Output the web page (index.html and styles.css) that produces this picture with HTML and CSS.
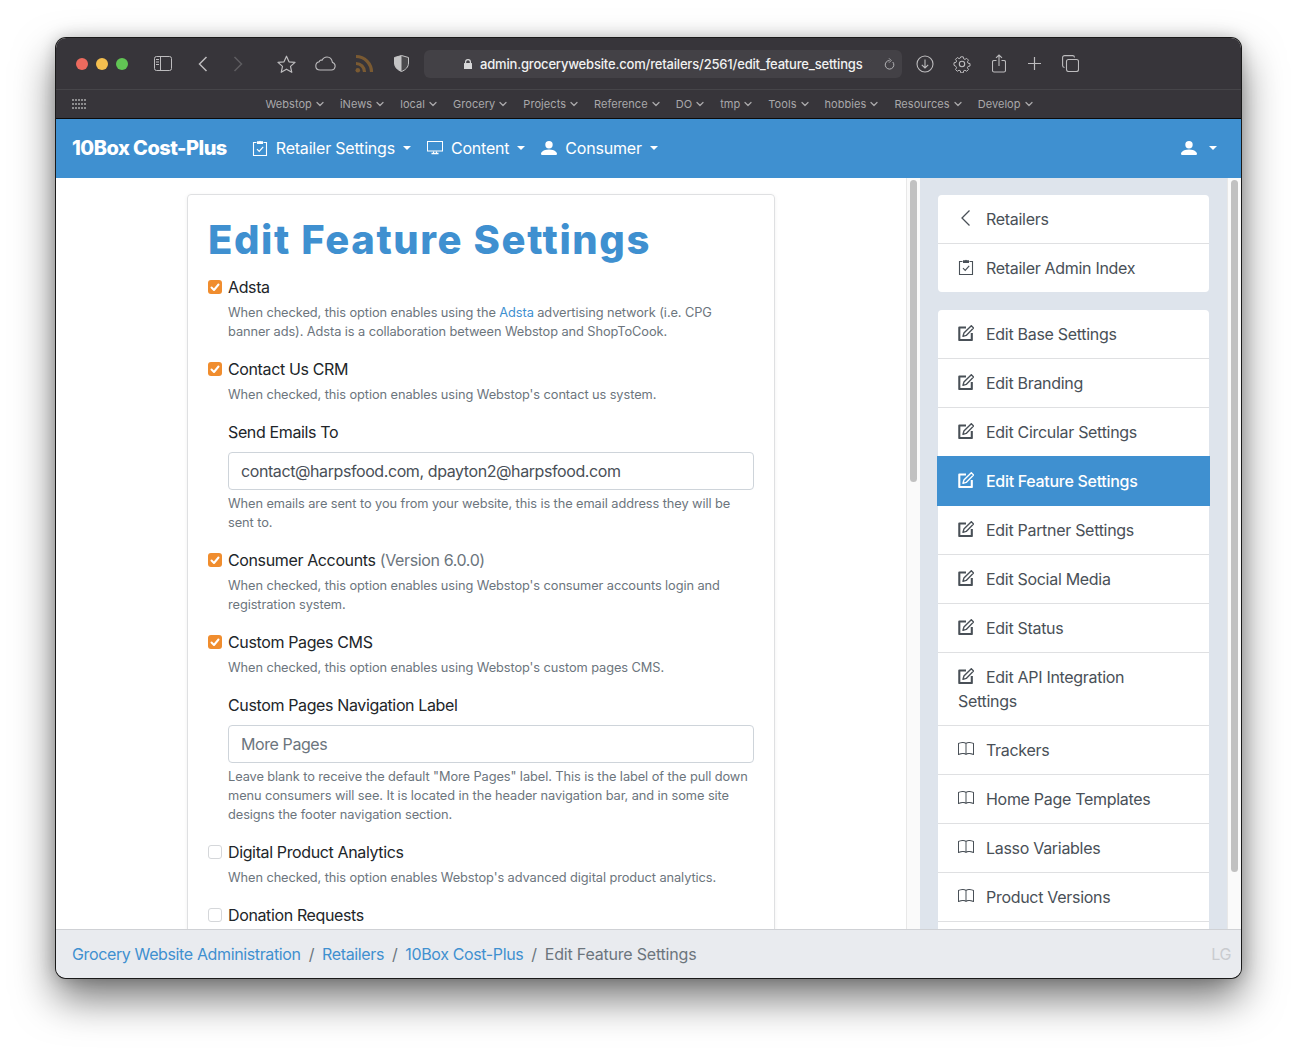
FILE: index.html
```html
<!DOCTYPE html>
<html lang="en">
<head>
<meta charset="UTF-8">
<title>Edit Feature Settings</title>
<link rel="stylesheet" href="styles.css">
</head>
<body>

<svg class="sprites" xmlns="http://www.w3.org/2000/svg">
    <symbol id="i-clipboard" viewBox="0 0 16 16">
        <path d="M4.500 2.500H1.500V15.500H14.500V2.500H11.500" fill="none" stroke="currentColor" stroke-width="1.100"/>
        <path d="M5 1.200h2.200a1 1 0 0 1 1.600 0H11V4H5z" fill="currentColor"/>
        <path d="M5 9.200 7.200 11.400 11.200 6.800" fill="none" stroke="currentColor" stroke-width="1.200"/>
    </symbol>
    <symbol id="i-pencil" viewBox="0 0 16 16">
        <path d="M8 2.500H1.300V15H13.800V8" fill="none" stroke="currentColor" stroke-width="2.100" stroke-linejoin="round"/>
        <path d="M13.300.7 15.600 3 8.200 10.400 5 11.300 5.900 8.100z" fill="none" stroke="currentColor" stroke-width="1.400" stroke-linejoin="round"/>
    </symbol>
    <symbol id="i-book" viewBox="0 0 16 16">
        <path d="M1 2.828c.885-.37 2.154-.769 3.388-.893 1.33-.134 2.458.063 3.112.752v9.746c-.935-.53-2.12-.603-3.213-.493-1.18.12-2.37.461-3.287.811V2.828zm7.500-.141c.654-.689 1.782-.886 3.112-.752 1.234.124 2.503.523 3.388.893v9.923c-.918-.35-2.107-.692-3.287-.81-1.094-.111-2.278-.039-3.213.492V2.687zM8 1.783C7.015.936 5.587.81 4.287.94c-1.514.153-3.042.672-3.994 1.105A.5.5 0 0 0 0 2.500v11a.5.5 0 0 0 .707.455c.882-.4 2.303-.881 3.680-1.020 1.409-.142 2.590.087 3.223.877a.5.5 0 0 0 .78 0c.633-.79 1.814-1.019 3.222-.877 1.378.139 2.800.62 3.681 1.020A.5.5 0 0 0 16 13.500v-11a.5.5 0 0 0-.293-.455c-.952-.433-2.480-.952-3.994-1.105C10.413.809 8.985.936 8 1.783z" fill="currentColor"/>
    </symbol>
    <symbol id="i-person" viewBox="0 0 16 16">
        <path d="M1 15s-1 0-1-1.200 1.800-4.300 8-4.300 8 3.100 8 4.300S15 15 15 15H1zm7-6.500a3.700 3.700 0 1 0 0-7.400 3.700 3.700 0 0 0 0 7.400z" fill="currentColor"/>
    </symbol>
    <symbol id="i-chev" viewBox="0 0 8 6">
        <path d="M1 1.500 4 4.500 7 1.500" fill="none" stroke="currentColor" stroke-width="1.300" stroke-linecap="round" stroke-linejoin="round"/>
    </symbol>
</svg>

<div class="window">
    <div class="toolbar">
        <span class="light red"></span>
        <span class="light yellow"></span>
        <span class="light green"></span>

        <svg class="tool t-sidebar" width="18" height="15" viewBox="0 0 18 15" fill="none" stroke="currentColor">
            <rect x=".5" y=".5" width="17" height="14" rx="2"/>
            <path d="M6.500.5v14" />
            <path d="M2 3.500h3M2 6h3M2 8.500h3" />
        </svg>
        <svg class="tool t-back" width="10" height="16" viewBox="0 0 10 16" fill="none" stroke="currentColor" stroke-width="1.500">
            <path d="M8.500 1 1.500 8l7 7"/>
        </svg>
        <svg class="tool t-forward" width="10" height="16" viewBox="0 0 10 16" fill="none" stroke="#5e5d60" stroke-width="1.500">
            <path d="M1.500 1l7 7-7 7"/>
        </svg>
        <svg class="tool t-star" width="19" height="18" viewBox="0 0 19 18" fill="none" stroke="currentColor" stroke-width="1.200" stroke-linejoin="round">
            <path d="M9.500 1.200 12 6.800l6 .6-4.500 4 1.300 5.900-5.300-3.100-5.300 3.100 1.300-5.900L1 7.400l6-.6z"/>
        </svg>
        <svg class="tool t-cloud" width="21" height="15" viewBox="0 0 21 15" fill="none" stroke="currentColor" stroke-width="1.100">
            <path d="M5 14h11.500a3.800 3.800 0 0 0 1-7.400C17 3.500 15 1 12 1 9.600 1 8 2.300 7 4.300 6 3.800 4.600 4.200 4.200 5.800 2 6.200.8 8 .8 10c0 2.300 1.800 4 4.200 4z"/>
        </svg>
        <svg class="tool t-rss" width="20" height="19" viewBox="0 0 20 19" fill="none" stroke="#7a5a32" stroke-width="3.200">
            <path d="M1 9.500a8.500 8.500 0 0 1 8.500 8.500"/>
            <path d="M1 2.500a15.500 15.500 0 0 1 15.500 15.500"/>
            <circle cx="2.800" cy="16.200" r="2.300" fill="#7a5a32" stroke="none"/>
        </svg>
        <svg class="tool t-shield" width="15" height="17" viewBox="0 0 15 17">
            <path d="M7.500.5 14.500 2.500V8c0 4-3 7-7 8.500C3.500 15 .5 12 .5 8V2.500z" fill="#4a494c" stroke="#c4c4c5"/>
            <path d="M7.500.5.500 2.500V8c0 4 3 7 7 8.500z" fill="#c4c4c5"/>
        </svg>

        <div class="urlbar">
            <svg class="lock" width="8" height="10" viewBox="0 0 8 10">
                <path d="M1 4V3a3 3 0 0 1 6 0v1h.5a.5.5 0 0 1 .5.500V9.500a.5.5 0 0 1-.5.500h-7a.5.5 0 0 1-.5-.500V4.500A.5.5 0 0 1 .5 4zm1.200 0h3.600V3a1.800 1.800 0 0 0-3.600 0z" fill="#d8d8d9"/>
            </svg>
            <span class="url">admin.grocerywebsite.com/retailers/2561/edit_feature_settings</span>
            <svg class="reload" width="11" height="12" viewBox="0 0 11 12" fill="none" stroke="#b4b4b6" stroke-width="1">
                <path d="M8.800 4a4.300 4.300 0 1 1-3.300-1.500"/>
                <path d="M5 .3 7.200 2.500 5 4.700" stroke-width=".9"/>
            </svg>
        </div>

        <svg class="tool t-download" width="18" height="18" viewBox="0 0 18 18" fill="none" stroke="currentColor" stroke-width="1.100">
            <circle cx="9" cy="9" r="8"/>
            <path d="M9 4.500v8.500M5.800 9.800 9 13l3.200-3.200"/>
        </svg>
        <svg class="tool t-gear" width="18" height="18" viewBox="0 0 18 18" fill="none" stroke="currentColor" stroke-width="1.100" stroke-linejoin="round">
            <circle cx="9" cy="9" r="2.700"/>
            <path d="M7.600 1h2.800l.4 2.200 1.500.7 1.900-1.200 2 2-1.200 1.900.7 1.500 2.200.4v2.800l-2.200.4-.7 1.500 1.200 1.900-2 2-1.900-1.200-1.500.7-.4 2.200H7.600l-.4-2.200-1.500-.7-1.900 1.200-2-2 1.200-1.900-.7-1.500L.1 10.400V7.600l2.200-.4.7-1.500-1.200-1.900 2-2 1.900 1.200 1.500-.7z" transform="translate(.9 .9) scale(.9)"/>
        </svg>
        <svg class="tool t-share" width="14" height="19" viewBox="0 0 14 19" fill="none" stroke="currentColor" stroke-width="1.100">
            <path d="M4.500 6.500H2a1.500 1.500 0 0 0-1.500 1.500v8.500A1.500 1.500 0 0 0 2 18h10a1.500 1.500 0 0 0 1.500-1.500V8A1.500 1.500 0 0 0 12 6.500H9.500"/>
            <path d="M7 12V1M4 3.800 7 1l3 2.800"/>
        </svg>
        <svg class="tool t-plus" width="13" height="13" viewBox="0 0 13 13" fill="none" stroke="currentColor" stroke-width="1.200">
            <path d="M6.500 0v13M0 6.500h13"/>
        </svg>
        <svg class="tool t-tabs" width="17" height="17" viewBox="0 0 17 17" fill="none" stroke="currentColor" stroke-width="1.100">
            <rect x="4.500" y="4.500" width="12" height="12" rx="2"/>
            <path d="M2.500 12.500A2 2 0 0 1 .6 10.500V2.600A2 2 0 0 1 2.600.6h7.900a2 2 0 0 1 2 1.900"/>
        </svg>
    </div>

    <div class="bookmarks">
        <svg class="apps" width="14" height="10" viewBox="0 0 14 10" fill="#8d8d8f">
            <path d="M0 0h2v2H0zM3 0h2v2H3zM6 0h2v2H6zM9 0h2v2H9zM12 0h2v2h-2zM0 4h2v2H0zM3 4h2v2H3zM6 4h2v2H6zM9 4h2v2H9zM12 4h2v2h-2zM0 8h2v2H0zM3 8h2v2H3zM6 8h2v2H6zM9 8h2v2H9zM12 8h2v2h-2z"/>
        </svg>
        <a class="bm">Webstop <svg><use href="#i-chev"/></svg></a>
        <a class="bm">iNews <svg><use href="#i-chev"/></svg></a>
        <a class="bm">local <svg><use href="#i-chev"/></svg></a>
        <a class="bm">Grocery <svg><use href="#i-chev"/></svg></a>
        <a class="bm">Projects <svg><use href="#i-chev"/></svg></a>
        <a class="bm">Reference <svg><use href="#i-chev"/></svg></a>
        <a class="bm">DO <svg><use href="#i-chev"/></svg></a>
        <a class="bm">tmp <svg><use href="#i-chev"/></svg></a>
        <a class="bm">Tools <svg><use href="#i-chev"/></svg></a>
        <a class="bm">hobbies <svg><use href="#i-chev"/></svg></a>
        <a class="bm">Resources <svg><use href="#i-chev"/></svg></a>
        <a class="bm">Develop <svg><use href="#i-chev"/></svg></a>
    </div>

    <nav class="navbar">
        <a class="brand">10Box Cost-Plus</a>
        <a class="nav-link"><svg class="nav-icon"><use href="#i-clipboard"/></svg>Retailer Settings<span class="caret"></span></a>
        <a class="nav-link">
            <svg class="nav-icon" viewBox="0 0 16 16" fill="none" stroke="currentColor">
                <rect x=".5" y="1.500" width="15" height="9.500"/>
                <path d="M6.500 11.500v2M9.500 11.500v2" />
                <path d="M4.500 13.500h7" stroke-width="1.500"/>
            </svg>Content<span class="caret"></span></a>
        <a class="nav-link"><svg class="nav-icon"><use href="#i-person"/></svg>Consumer<span class="caret"></span></a>
        <a class="nav-link user"><svg class="nav-icon"><use href="#i-person"/></svg><span class="caret"></span></a>
    </nav>

    <div class="body">
        <main class="main">
            <div class="card">
                <h1 class="title">Edit Feature Settings</h1>

                <div class="feature">
                    <div class="check on"><svg viewBox="0 0 14 14"><path d="M3.500 7.500 6 10l4.500-5.500"/></svg></div>
                    <label>Adsta</label>
                    <p class="help">When checked, this option enables using the <a href="#">Adsta</a> advertising network (i.e. CPG banner ads). Adsta is a collaboration between Webstop and ShopToCook.</p>
                </div>

                <div class="feature">
                    <div class="check on"><svg viewBox="0 0 14 14"><path d="M3.500 7.500 6 10l4.500-5.500"/></svg></div>
                    <label>Contact Us CRM</label>
                    <p class="help">When checked, this option enables using Webstop's contact us system.</p>
                    <div class="sub">
                        <label>Send Emails To</label>
                        <div class="input">contact@harpsfood.com, dpayton2@harpsfood.com</div>
                        <p class="help">When emails are sent to you from your website, this is the email address they will be sent to.</p>
                    </div>
                </div>

                <div class="feature">
                    <div class="check on"><svg viewBox="0 0 14 14"><path d="M3.500 7.500 6 10l4.500-5.500"/></svg></div>
                    <label>Consumer Accounts <span class="muted">(Version 6.0.0)</span></label>
                    <p class="help">When checked, this option enables using Webstop's consumer accounts login and registration system.</p>
                </div>

                <div class="feature">
                    <div class="check on"><svg viewBox="0 0 14 14"><path d="M3.500 7.500 6 10l4.500-5.500"/></svg></div>
                    <label>Custom Pages CMS</label>
                    <p class="help">When checked, this option enables using Webstop's custom pages CMS.</p>
                    <div class="sub">
                        <label>Custom Pages Navigation Label</label>
                        <div class="input placeholder">More Pages</div>
                        <p class="help">Leave blank to receive the default "More Pages" label. This is the label of the pull down menu consumers will see. It is located in the header navigation bar, and in some site designs the footer navigation section.</p>
                    </div>
                </div>

                <div class="feature">
                    <div class="check"></div>
                    <label>Digital Product Analytics</label>
                    <p class="help">When checked, this option enables Webstop's advanced digital product analytics.</p>
                </div>

                <div class="feature">
                    <div class="check"></div>
                    <label>Donation Requests</label>
                </div>
            </div>
        </main>

        <div class="scroll"><div class="thumb thumb-main"></div></div>

        <aside class="side">
            <div class="group">
                <a class="item"><svg class="item-icon" viewBox="0 0 16 16" fill="none" stroke="currentColor" stroke-width="1.300"><path d="M11.500 .5 4 8l7.500 7.500"/></svg>Retailers</a>
                <a class="item"><svg class="item-icon"><use href="#i-clipboard"/></svg>Retailer Admin Index</a>
            </div>
            <div class="group">
                <a class="item"><svg class="item-icon"><use href="#i-pencil"/></svg>Edit Base Settings</a>
                <a class="item"><svg class="item-icon"><use href="#i-pencil"/></svg>Edit Branding</a>
                <a class="item"><svg class="item-icon"><use href="#i-pencil"/></svg>Edit Circular Settings</a>
                <a class="item active"><svg class="item-icon"><use href="#i-pencil"/></svg>Edit Feature Settings</a>
                <a class="item"><svg class="item-icon"><use href="#i-pencil"/></svg>Edit Partner Settings</a>
                <a class="item"><svg class="item-icon"><use href="#i-pencil"/></svg>Edit Social Media</a>
                <a class="item"><svg class="item-icon"><use href="#i-pencil"/></svg>Edit Status</a>
                <a class="item"><svg class="item-icon"><use href="#i-pencil"/></svg>Edit API Integration<br>Settings</a>
                <a class="item"><svg class="item-icon"><use href="#i-book"/></svg>Trackers</a>
                <a class="item"><svg class="item-icon"><use href="#i-book"/></svg>Home Page Templates</a>
                <a class="item"><svg class="item-icon"><use href="#i-book"/></svg>Lasso Variables</a>
                <a class="item"><svg class="item-icon"><use href="#i-book"/></svg>Product Versions</a>
                <div class="item-rest"></div>
            </div>
        </aside>

        <div class="scroll"><div class="thumb thumb-side"></div></div>
    </div>

    <footer class="crumbs">
        <a href="#">Grocery Website Administration</a><span class="sep">/</span>
        <a href="#">Retailers</a><span class="sep">/</span>
        <a href="#">10Box Cost-Plus</a><span class="sep">/</span>
        <span class="here">Edit Feature Settings</span>
        <span class="initials">LG</span>
    </footer>
</div>

</body>
</html>
```

FILE: styles.css
```css
html, body {
    height: 100%;
    overflow: hidden;
}
body {
    margin: 0;
    padding: 38px 0 0 56px;
    background: #fff;
    font-family: Inter, "Liberation Sans", sans-serif;
    font-size: 16px;
    line-height: 24px;
    letter-spacing: -.37px;
    color: #212529;
    box-sizing: border-box;
}
a {
    text-decoration: none;
}
.sprites {
    display: none;
}

.window {
    width: 1185px;
    height: 940px;
    display: flex;
    flex-direction: column;
    border-radius: 10px;
    overflow: hidden;
    box-shadow: 0 0 0 1px #1a1a1a, 0 20px 42px rgba(0,0,0,.55), 0 0 16px rgba(0,0,0,.22);
}

/* browser chrome */
.toolbar {
    height: 51px;
    display: flex;
    align-items: center;
    background: #37353a;
    color: #bdbcbe;
    border-bottom: 1px solid #464549;
    padding-left: 20px;
    flex: none;
}
.light {
    width: 12px;
    height: 12px;
    border-radius: 50%;
    margin-right: 8px;
    flex: none;
}
.red { background: #ec6a5e; }
.yellow { background: #f4bf4f; }
.green { background: #61c554; }
.tool {
    flex: none;
}
.t-sidebar { margin-left: 18px; }
.t-back { margin-left: 26px; }
.t-forward { margin-left: 25px; }
.t-star { margin-left: 34px; }
.t-cloud { margin-left: 19px; }
.t-rss { margin-left: 19px; }
.t-shield { margin-left: 19px; }
.urlbar {
    width: 478px;
    height: 28px;
    margin-left: 15px;
    display: flex;
    align-items: center;
    background: #434146;
    border-radius: 6px;
    flex: none;
}
.lock {
    margin-left: 40px;
}
.url {
    margin-left: 8px;
    font-size: 13px;
    font-weight: 500;
    letter-spacing: -.18px;
    color: #f1f1f1;
    white-space: nowrap;
    width: 383px;
}
.reload {
    margin-left: 21px;
}
.t-download { margin-left: 14px; }
.t-gear { margin-left: 19px; }
.t-share { margin-left: 21px; }
.t-plus { margin-left: 22px; }
.t-tabs { margin-left: 21px; }

.bookmarks {
    height: 28px;
    display: flex;
    align-items: center;
    justify-content: center;
    position: relative;
    background: #37353a;
    border-bottom: 1px solid #0b0b0b;
    gap: 16px;
    flex: none;
    font-size: 11px;
    letter-spacing: .06px;
    padding-left: 1px;
}
.apps {
    position: absolute;
    left: 16px;
    top: 9px;
}
.bm {
    color: #a9a8aa;
    display: flex;
    align-items: center;
    white-space: nowrap;
}
.bm svg {
    width: 8px;
    height: 6px;
    margin-left: 4px;
}

/* app navbar */
.navbar {
    height: 59px;
    display: flex;
    align-items: center;
    background: #3f90d0;
    color: #fff;
    padding: 0 16px 2px;
    box-sizing: border-box;
    flex: none;
    letter-spacing: -.2px;
}
.brand {
    font-size: 20px;
    font-weight: 800;
    letter-spacing: -.52px;
    margin-right: 25px;
    white-space: nowrap;
}
.nav-link {
    display: flex;
    align-items: center;
    margin-right: 16px;
    color: #fff;
}
.nav-icon {
    width: 16px;
    height: 16px;
    margin-right: 8px;
}
.caret {
    width: 0;
    height: 0;
    margin-left: 8px;
    border-top: 4.8px solid #fff;
    border-left: 4.8px solid transparent;
    border-right: 4.8px solid transparent;
}
.user {
    margin-left: auto;
    margin-right: 8px;
}
.user .caret {
    margin-left: 4px;
}

/* page body */
.body {
    flex: 1;
    display: flex;
    min-height: 0;
    overflow: hidden;
}
.main {
    width: 850px;
    flex: none;
    padding: 16px 0 0 131px;
    box-sizing: border-box;
    overflow: hidden;
    background: #fff;
}
.card {
    width: 588px;
    box-sizing: border-box;
    padding: 16px 20px 20px 20px;
    border: 1px solid #dfe0e2;
    border-radius: 4px;
    box-shadow: 0 1px 4px rgba(0,0,0,.06);
}
.title {
    margin: 0 0 6px;
    font-size: 40px;
    font-weight: 800;
    line-height: 57px;
    letter-spacing: 1.6px;
    color: #3f90d0;
    white-space: nowrap;
    height: 58px;
}
.feature {
    position: relative;
    padding-left: 20px;
    margin-bottom: 16px;
}
.feature label {
    display: block;
    color: #212529;
}
.muted {
    color: #6c757d;
}
.check {
    position: absolute;
    left: 0;
    top: 5px;
    width: 14px;
    height: 14px;
    box-sizing: border-box;
    border: 1px solid #d5d7da;
    border-radius: 3px;
    background: #fff;
}
.check.on {
    background: #f08d2e;
    border: 0;
}
.check svg {
    display: block;
    width: 14px;
    height: 14px;
    fill: none;
    stroke: #fff;
    stroke-width: 2;
    stroke-linecap: round;
    stroke-linejoin: round;
}
.help {
    margin: 4px 0 0;
    font-size: 12.8px;
    line-height: 19.2px;
    letter-spacing: -.08px;
    color: #6c757d;
}
.help a {
    color: #3f90d0;
}
.sub {
    margin-top: 15px;
}
.input {
    height: 38px;
    margin-top: 8px;
    padding: 0 12px;
    box-sizing: border-box;
    border: 1px solid #ced4da;
    border-radius: 4px;
    line-height: 36px;
    letter-spacing: -.41px;
    color: #495057;
}
.placeholder {
    color: #6c757d;
}

/* scrollbars */
.scroll {
    width: 14px;
    flex: none;
    background: #fafafa;
    border-left: 1px solid #e8e8e8;
    box-sizing: border-box;
    padding: 2px 3px 0 3px;
}
.thumb {
    background: #c1c1c1;
    border-radius: 4px;
}
.thumb-main { height: 302px; }
.thumb-side { height: 692px; }

/* sidebar */
.side {
    width: 307px;
    flex: none;
    box-sizing: border-box;
    padding: 17px 18px 0 18px;
    background: #dee4ec;
    overflow: hidden;
    letter-spacing: -.3px;
}
.group {
    background: #fff;
    border-radius: 4px;
    margin-bottom: 18px;
}
.item {
    display: block;
    padding: 12px 20px;
    color: #495057;
    border-bottom: 1px solid #dfe0e2;
}
.item-rest {
    height: 48px;
}
.group:first-child .item:last-child {
    border-bottom: 0;
}
.item-icon {
    width: 16px;
    height: 16px;
    margin-right: 12px;
    vertical-align: -1px;
}
.active {
    background: #3f90d0;
    color: #fff;
    margin: -1px -1px 0;
    padding: 13px 21px 12px;
    border-bottom-color: #3f90d0;
    font-weight: 500;
}

/* footer */
.crumbs {
    height: 49px;
    flex: none;
    display: flex;
    align-items: center;
    box-sizing: border-box;
    padding: 0 10px 0 16px;
    background: #e9ebef;
    border-top: 1px solid #cfd1d5;
    white-space: nowrap;
}
.crumbs a {
    color: #3f90d0;
}
.sep {
    padding: 0 8px;
    color: #6c757d;
}
.here {
    color: #6c757d;
    letter-spacing: -.2px;
}
.initials {
    margin-left: auto;
    color: #c9cbcf;
}
```
